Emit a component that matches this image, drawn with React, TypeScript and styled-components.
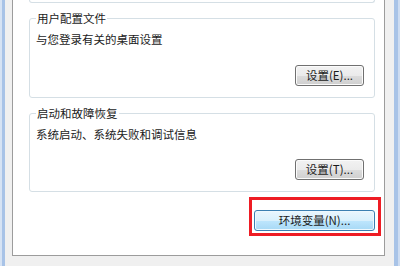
import styled, { createGlobalStyle } from "styled-components";

const GlobalStyle = createGlobalStyle`
  html, body {
    margin: 0;
    padding: 0;
  }
  body {
    font-family: "Noto Sans CJK SC", "Noto Sans", sans-serif;
    color: #1b1b1b;
  }
`;

const Window = styled.div`
  width: 400px;
  height: 266px;
  display: flex;
  background: #f0f0f0;
  overflow: hidden;
`;

const Edge = styled.div<{ $side: "left" | "right" }>`
  width: ${(p) => (p.$side === "left" ? 5 : 6)}px;
  flex-shrink: 0;
  background: ${(p) =>
    p.$side === "left"
      ? "linear-gradient(to right, #d6e3f4 0 2px, #a8c3e7 2px 5px)"
      : "linear-gradient(to right, #a8c3e7 0 4px, #cddcf1 4px 6px)"};
`;

const Body = styled.div`
  flex: 1;
  display: flex;
  flex-direction: column;
  padding: 0 9px 10px 7px;
`;

const TabPanel = styled.div`
  flex: 1;
  background: #ffffff;
  border: 1px solid #9c9c9c;
  border-top: none;
  padding: 0 9px 0 16px;
  display: flex;
  flex-direction: column;
`;

const CutGroup = styled.div`
  height: 2px;
  border: 1px solid #d5dfe5;
  border-top: none;
  border-radius: 0 0 3px 3px;
`;

const Group = styled.fieldset`
  margin: 8px 0 0;
  padding: 7px 10px 11px 6px;
  border: 1px solid #d5dfe5;
  border-radius: 3px;
  min-inline-size: 0;
  box-shadow: inset 1px 1px 0 #ffffff;
`;

const GroupTitle = styled.legend`
  padding: 0 1px;
  margin-left: 0;
  font-size: 11.5px;
  line-height: 14px;
  color: #1b1b1b;
`;

const Description = styled.div`
  font-size: 11.5px;
  line-height: 14px;
`;

const ButtonRow = styled.div<{ $gap: number }>`
  display: flex;
  justify-content: flex-end;
  margin-top: ${(p) => p.$gap}px;
`;

const Button = styled.button<{ $width: number; $hot?: boolean }>`
  box-sizing: border-box;
  width: ${(p) => p.$width}px;
  height: 21px;
  padding: 0;
  font-family: "Noto Sans CJK SC", "Noto Sans", sans-serif;
  font-size: 11.5px;
  line-height: 19px;
  color: #1b1b1b;
  border-radius: 3px;
  border: 1px solid ${(p) => (p.$hot ? "#3c7fb1" : "#707070")};
  box-shadow: inset 0 0 0 1px ${(p) => (p.$hot ? "#eef8fe" : "#fbfbfb")};
  background: ${(p) =>
    p.$hot
      ? "linear-gradient(#eaf6fd 0%, #d9f0fc 50%, #bee6fd 50%, #a7d9f5 100%)"
      : "linear-gradient(#f2f2f2 0%, #ebebeb 50%, #dddddd 50%, #cfcfcf 100%)"};
`;

const EnvWrap = styled.div`
  position: relative;
`;

const Highlight = styled.div`
  position: absolute;
  left: -5px;
  top: -9px;
  right: -6px;
  bottom: -5px;
  border: 3px solid #ee1c24;
  pointer-events: none;
`;

export default function App() {
  return (
    <>
      <GlobalStyle />
      <Window>
        <Edge $side="left" />
        <Body>
          <TabPanel>
            <CutGroup />
            <Group>
              <GroupTitle>用户配置文件</GroupTitle>
              <Description>与您登录有关的桌面设置</Description>
              <ButtonRow $gap={19}>
                <Button $width={69}>设置(E)...</Button>
              </ButtonRow>
            </Group>
            <Group>
              <GroupTitle>启动和故障恢复</GroupTitle>
              <Description>系统启动、系统失败和调试信息</Description>
              <ButtonRow $gap={18}>
                <Button $width={69}>设置(T)...</Button>
              </ButtonRow>
            </Group>
            <ButtonRow $gap={14}>
              <EnvWrap>
                <Button $width={121} $hot>
                  环境变量(N)...
                </Button>
                <Highlight />
              </EnvWrap>
            </ButtonRow>
          </TabPanel>
        </Body>
        <Edge $side="right" />
      </Window>
    </>
  );
}
